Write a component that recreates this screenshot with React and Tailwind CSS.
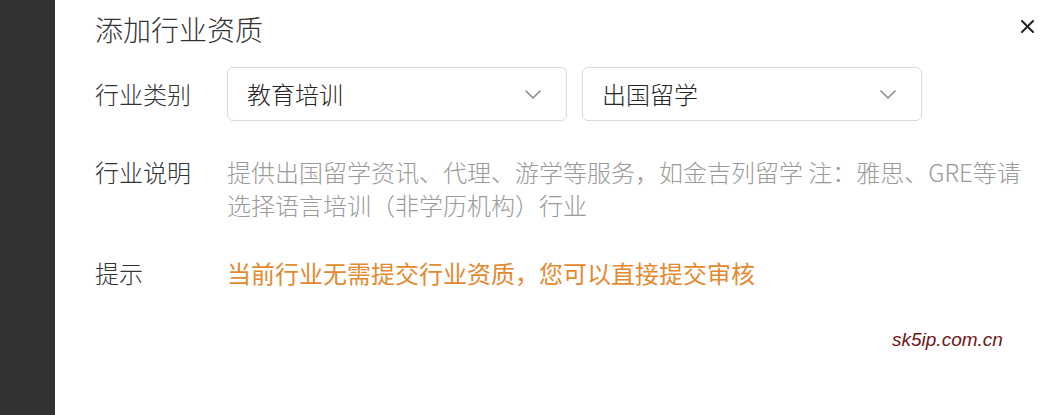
import React from "react";

const font = { fontFamily: '"Noto Sans CJK SC", "Noto Sans", sans-serif' };

const Chevron = () => (
  <svg width="16" height="9" viewBox="0 0 16 9" fill="none">
    <path d="M1 1l7 7 7-7" stroke="#8c8c8c" strokeWidth="1.6" strokeLinecap="round" strokeLinejoin="round" />
  </svg>
);

const Select = ({ value }) => (
  <div className="flex h-[54px] w-[340px] items-center justify-between rounded-[6px] border border-[#d9d9d9] bg-white pl-[19px] pr-[25px]">
    <span className="text-[24px] text-[#262626]">{value}</span>
    <Chevron />
  </div>
);

export default function App() {
  return (
    <div className="flex h-[415px] w-[1055px] overflow-hidden font-light" style={font}>
      <div className="w-[55px] shrink-0 bg-[#333333]" />
      <div className="relative flex-1 bg-white pl-[40px]">
        <h1 className="pt-[10px] text-[28px] leading-[38px] text-[#333333]">添加行业资质</h1>
        <button className="absolute right-[21px] top-[20px]">
          <svg width="13" height="13" viewBox="0 0 13 13">
            <path d="M1 1l11 11M12 1L1 12" stroke="#222" strokeWidth="2" strokeLinecap="round" />
          </svg>
        </button>

        <div className="mt-[19px] flex items-center">
          <div className="w-[132px] text-[24px] text-[#333333]">行业类别</div>
          <div className="flex gap-[15px]">
            <Select value="教育培训" />
            <Select value="出国留学" />
          </div>
        </div>

        <div className="mt-[34px] flex">
          <div className="w-[132px] shrink-0 text-[24px] leading-[33px] text-[#333333]">行业说明</div>
          <p className="w-[805px] text-[24px] leading-[33px] text-[#9a9a9a]">
            提供出国留学资讯、代理、游学等服务，如金吉列留学 注：雅思、GRE等请选择语言培训（非学历机构）行业
          </p>
        </div>

        <div className="mt-[35px] flex">
          <div className="w-[132px] shrink-0 text-[24px] leading-[33px] text-[#333333]">提示</div>
          <p className="text-[24px] font-normal leading-[33px] text-[#e3892f]">当前行业无需提交行业资质，您可以直接提交审核</p>
        </div>

        <div
          className="absolute left-[837px] top-[326px] text-[19px] font-medium italic text-[#6e1616]"
          style={{ fontFamily: '"Liberation Sans", sans-serif' }}
        >
          sk5ip.com.cn
        </div>
      </div>
    </div>
  );
}
